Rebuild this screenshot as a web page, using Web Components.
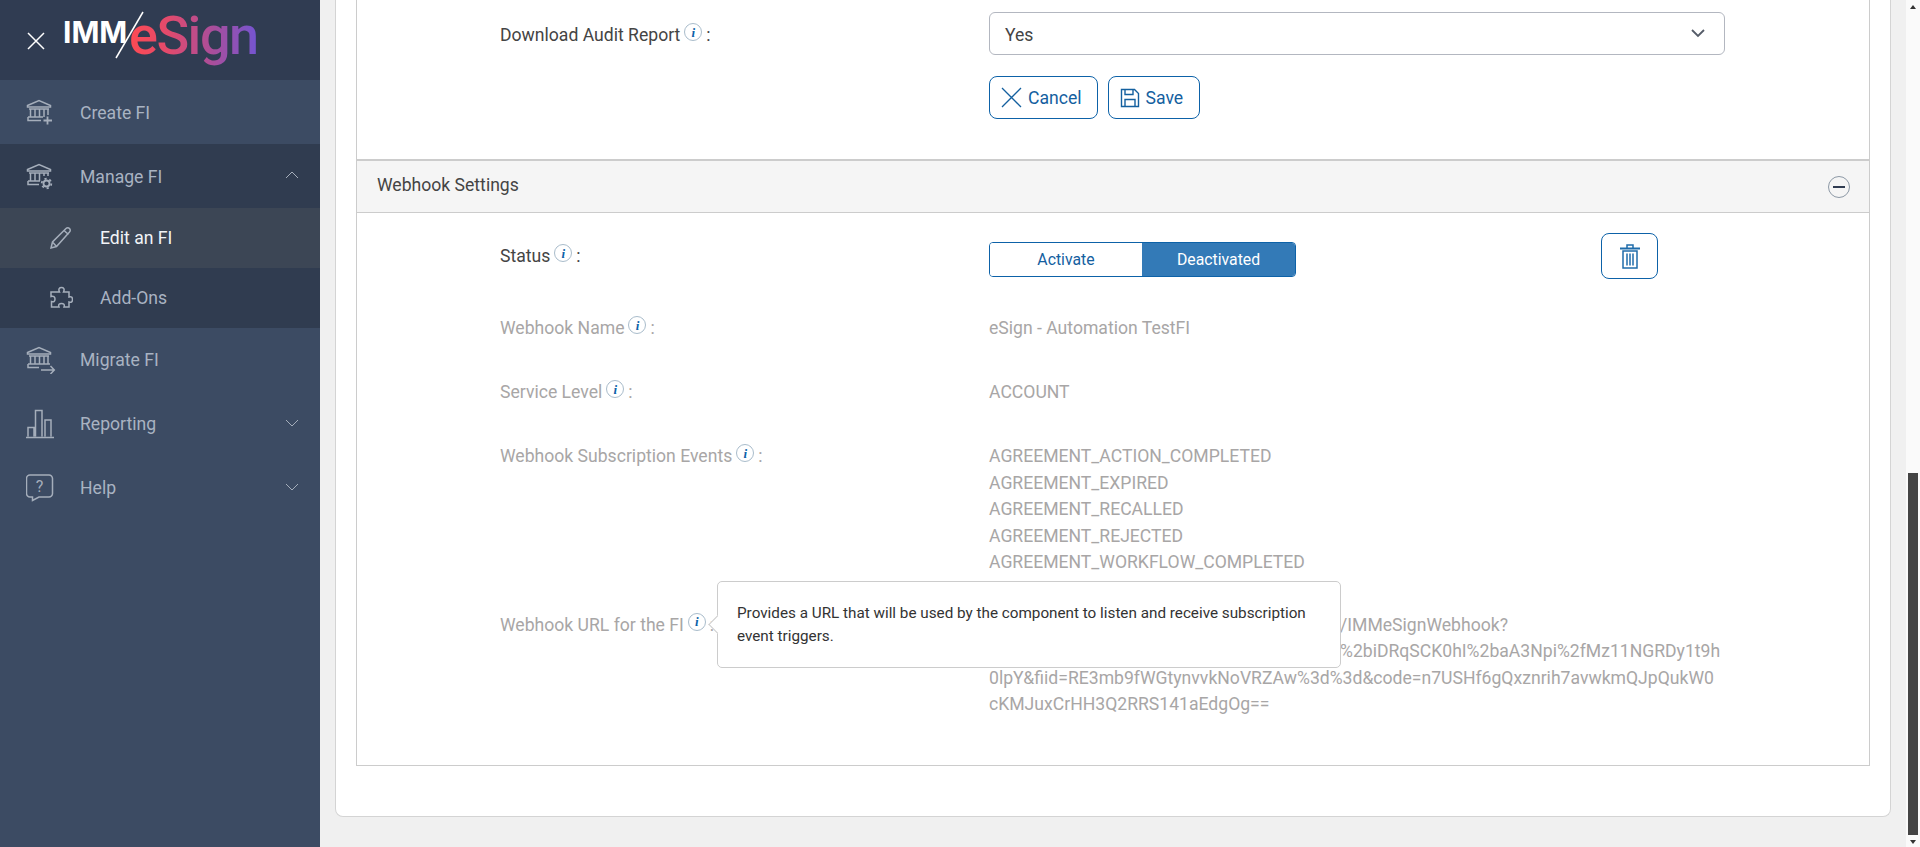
<!DOCTYPE html>
<html lang="en">
<head>
<meta charset="utf-8">
<title>IMM eSign</title>
<style>
  html, body { margin: 0; height: 847px; overflow: hidden; }
  body { font-family: Roboto, "Liberation Sans", sans-serif; font-size: 17.6px; line-height: 1.5; color: #444; }
  #app { display: flex; height: 847px; }
</style>
</head>
<body>
<div id="app">
  <side-bar>
    <nav-item label="Create FI" icon="bank-plus" tone="light" style="padding-top:2px;box-sizing:border-box"></nav-item>
    <nav-item label="Manage FI" icon="bank-gear" chevron="up" tone="dark" style="padding-top:2px;box-sizing:border-box"></nav-item>
    <nav-item label="Edit an FI" icon="pencil" sub tone="active"></nav-item>
    <nav-item label="Add-Ons" icon="puzzle" sub tone="dark"></nav-item>
    <nav-item label="Migrate FI" icon="bank-arrow" tone="light"></nav-item>
    <nav-item label="Reporting" icon="bars" chevron="down" tone="light"></nav-item>
    <nav-item label="Help" icon="help" chevron="down" tone="light"></nav-item>
  </side-bar>
  <main-area>
    <settings-panel>
      <form-row label="Download Audit Report" class="top">
        <select-box>Yes</select-box>
        <div style="display:flex;gap:10px;margin-top:21px">
          <action-button icon="x">Cancel</action-button>
          <action-button icon="save">Save</action-button>
        </div>
      </form-row>
    </settings-panel>
    <section-header>Webhook Settings</section-header>
    <settings-panel class="body">
      <form-row label="Status" class="status">
        <div style="display:flex;justify-content:space-between;width:669px;align-items:flex-start">
          <status-toggle style="margin-top:9px"></status-toggle>
          <delete-button></delete-button>
        </div>
      </form-row>
      <form-row label="Webhook Name" muted>eSign - Automation TestFI</form-row>
      <form-row label="Service Level" muted>ACCOUNT</form-row>
      <form-row label="Webhook Subscription Events" muted style="margin-bottom:36.600px">
        AGREEMENT_ACTION_COMPLETED<br>
        AGREEMENT_EXPIRED<br>
        AGREEMENT_RECALLED<br>
        AGREEMENT_REJECTED<br>
        AGREEMENT_WORKFLOW_COMPLETED
      </form-row>
      <form-row label="Webhook URL for the FI" muted last>
        <!-- start of the first two lines sits under the tooltip in the reference -->
        <span style="margin-left:351px">/IMMeSignWebhook?</span><br>
        <span style="margin-left:351px">%2biDRqSCK0hI%2baA3Npi%2fMz11NGRDy1t9h</span><br>
        0lpY&amp;fiid=RE3mb9fWGtynvvkNoVRZAw%3d%3d&amp;code=n7USHf6gQxznrih7avwkmQJpQukW0<br>
        cKMJuxCrHH3Q2RRS141aEdgOg==
        <info-tip slot="tip">Provides a URL that will be used by the component to listen and receive subscription event triggers.</info-tip>
      </form-row>
    </settings-panel>
  </main-area>
  <scroll-rail></scroll-rail>
</div>

<script>
const ICONS = {
  "bank-plus": `<svg width="28" height="28" viewBox="0 1 28 28"><path d="M1.500 7.500 13 2.500l11.500 5v1.500h-23zM3 11h20M4.500 11v8M9 11v8M13.500 11v8M18 11v8M22 11v6M2 19h15M2 19v3.500h13"/><path d="M21.500 18.500v8M17.500 22.500h8.500" stroke-width="1.800"/></svg>`,
  "bank-gear": `<svg width="28" height="28" viewBox="0 1 28 28"><path d="M1.500 7.500 13 2.500l11.500 5v1.500h-23zM3 11h20M4.500 11v8M9 11v8M13.500 11v8M18 11v3M22 11v3M2 19h12M2 19v3.500h11"/><circle cx="20.500" cy="21.500" r="3" stroke-width="1.800"/><circle cx="20.500" cy="21.500" r="4.800" stroke-width="1.800" stroke-dasharray="2.200 2.800"/></svg>`,
  "bank-arrow": `<svg width="30" height="28" viewBox="0 0 30 28"><path d="M1.500 7.500 13 2.500l11.500 5v1.500h-23zM3 11h20M4.500 11v8M9 11v8M13.500 11v8M18 11v8M22 11v8M2 19h22M2 19v3.500h11M15 25h13M24.500 21l3.800 4-3.800 4" transform="translate(0 -1)"/></svg>`,
  pencil: `<svg width="24" height="24" viewBox="0 0 24 24"><path d="M2 22l1.500-6L17 2.500c1-1 2.500-1 3.500 0s1 2.500 0 3.500L7.500 20.500zM3.500 16l4 4.500M15 4.500l4.500 4"/></svg>`,
  puzzle: `<svg width="24" height="24" viewBox="0 0 24 24"><path d="M8 6h2.500C9 3 10.500 1.500 12.500 1.500S16 3 14.500 6H20v5c2.500-1 3.500.5 3.500 2.500S22.500 17 20 16v5h-5c1-2.500-.5-3.500-2.500-3.500S9 18.500 10 21H2.500v-5.500c2.500 1 3.500-.5 3.500-2.500S4.500 9.500 2 10.500V6z"/></svg>`,
  bars: `<svg width="30" height="30" viewBox="1 0 30 30"><path d="M1 28.500h28M3 27.500v-9h6v9M10.500 27.500V1.500h6.500v26M20 27.500V11h6v16.500"/></svg>`,
  help: `<svg width="30" height="30" viewBox="2 0 30 30"><path d="M6 2h19a3.500 3.500 0 0 1 3.500 3.500v15a3.500 3.500 0 0 1-3.500 3.500H15l-6.500 3.500V24H6a3.500 3.500 0 0 1-3.500-3.500v-15A3.500 3.500 0 0 1 6 2z"/><text x="15.500" y="18.500" text-anchor="middle" font-family="Roboto, sans-serif" font-size="16" fill="#a5aebb" stroke="none">?</text></svg>`,
};

class SideBar extends HTMLElement {
  static styles = `
    <style>
      :host { display: flex; flex-direction: column; width: 320px; flex: none; background: #3c4b63; }
      .brand { height: 80px; background: #303c52; display: flex; align-items: flex-start; flex: none; }
      .close { margin: 32px 0 0 27px; }
      .logo { position: relative; margin: 0 0 0 20px; width: 200px; height: 70px; }
      .imm { position: absolute; left: -2px; top: 12px; font: 700 30px/40px Inter, Roboto, sans-serif; letter-spacing: 0; color: #fff; }
      .esign { position: absolute; left: 64px; top: 4px; font: 500 54px/64px Roboto, sans-serif; letter-spacing: -1.500px;
        background: linear-gradient(90deg, #ff4a52 0%, #e24a6c 30%, #a94e9b 65%, #7355d2 100%);
        -webkit-background-clip: text; background-clip: text; color: transparent; }
      .slash { position: absolute; left: 0; top: 0; }
    </style>
  `;

  get template() {
    return `
      ${SideBar.styles}
      <div class="brand">
        <svg class="close" width="18" height="18" viewBox="0 0 18 18"><path d="M1 1l16 16M17 1L1 17" stroke="#fff" stroke-width="1.500" fill="none"/></svg>
        <div class="logo">
          <span class="imm">IMM</span>
          <span class="esign">eSign</span>
          <svg class="slash" width="100" height="70"><path d="M78 12 51 58" stroke="#fff" stroke-width="1.500"/></svg>
        </div>
      </div>
      <slot></slot>
    `;
  }

  constructor() {
    super();
    this.attachShadow({ mode: "open" });
  }

  connectedCallback() {
    this.shadowRoot.innerHTML = this.template;
  }
}

class NavItem extends HTMLElement {
  static styles = `
    <style>
      :host { display: flex; align-items: center; height: 64px; padding-left: 26px; position: relative; font-size: 17.6px; color: #a9b3c2; flex: none; }
      :host([tone="light"]) { background: #3c4b63; }
      :host([tone="dark"]) { background: #303c50; }
      :host([tone="active"]) { background: #3c4655; color: #f2f4f7; }
      :host([sub]) { height: 60px; padding-left: 49px; }
      .icon { width: 54px; display: flex; flex: none; }
      :host([sub]) .icon { width: 51px; }
      svg { fill: none; stroke: #a5aebb; stroke-width: 1.500; }
      .chev { position: absolute; right: 21px; top: 50%; margin-top: -5px; }
      .chev path { stroke-width: 1; }
    </style>
  `;

  get template() {
    const chevron = this.getAttribute("chevron");
    const paths = { up: "M1 7l6-6 6 6", down: "M1 1l6 6 6-6" };
    return `
      ${NavItem.styles}
      <span class="icon">${ICONS[this.getAttribute("icon")] || ""}</span>
      <span>${this.getAttribute("label")}</span>
      ${chevron ? `<svg class="chev" width="14" height="9" viewBox="0 0 14 9"><path d="${paths[chevron]}"/></svg>` : ""}
    `;
  }

  constructor() {
    super();
    this.attachShadow({ mode: "open" });
  }

  connectedCallback() {
    this.shadowRoot.innerHTML = this.template;
  }
}

class MainArea extends HTMLElement {
  constructor() {
    super();
    this.attachShadow({ mode: "open" }).innerHTML = `
      <style>
        :host { display: block; flex: 1; background: #f0f0f0; padding-left: 15px; min-width: 0; }
        .card { box-sizing: border-box; width: 1556px; height: 817px; background: #fff; border: 1px solid #d4d4d4; border-top: 0; border-radius: 0 0 8px 8px; padding: 0 20px 0 20px; }
      </style>
      <div class="card"><slot></slot></div>
    `;
  }
}

class SettingsPanel extends HTMLElement {
  constructor() {
    super();
    this.attachShadow({ mode: "open" }).innerHTML = `
      <style>
        :host { display: block; box-sizing: border-box; border: 1px solid #ccc; border-width: 0 1px; height: 159px; padding-left: 143px; }
        :host(.body) { height: 553px; border-bottom-width: 1px; padding-top: 20px; }
      </style>
      <slot></slot>
    `;
  }
}

class FormRow extends HTMLElement {
  static styles = `
    <style>
      :host { display: grid; grid-template-columns: 489px 736px; position: relative; margin-bottom: 37.600px; }
      :host(.top) { padding-top: 12px; margin: 0; }
      :host(.top) .label { padding-top: 10px; }
      :host(.status) { margin-bottom: 36.400px; }
      :host(.status) .label { padding-top: 10px; }
      :host([last]) { margin: 0; }
      :host([muted]) { color: #a8a6a6; }
      .label { display: flex; align-items: flex-start; }
      info-mark { margin: 1px 4px 0 4px; }
      .tip { position: absolute; left: 217px; top: -31px; }
    </style>
  `;

  get template() {
    return `
      ${FormRow.styles}
      <div class="label"><span>${this.getAttribute("label")}</span><info-mark></info-mark><span>:</span></div>
      <div class="value"><slot></slot></div>
      <div class="tip"><slot name="tip"></slot></div>
    `;
  }

  constructor() {
    super();
    this.attachShadow({ mode: "open" });
  }

  connectedCallback() {
    this.shadowRoot.innerHTML = this.template;
  }
}

class InfoMark extends HTMLElement {
  constructor() {
    super();
    this.attachShadow({ mode: "open" }).innerHTML = `
      <style>
        :host { display: inline-flex; box-sizing: border-box; width: 18px; height: 18px; border: 1px solid #a9bccb; border-radius: 50%; align-items: center; justify-content: center;
          font: italic 700 13px/1 "Liberation Serif", serif; color: #0d62a8; }
      </style>
      i
    `;
  }
}

class SelectBox extends HTMLElement {
  constructor() {
    super();
    this.attachShadow({ mode: "open" }).innerHTML = `
      <style>
        :host { display: flex; box-sizing: border-box; height: 43px; align-items: center; justify-content: space-between; padding: 0 19px 0 15px; border: 1px solid #b3b7c0; border-radius: 6px; color: #444; }
        span { padding-top: 3px; }
        svg { fill: none; stroke: #555c68; stroke-width: 1.800; }
      </style>
      <span><slot></slot></span>
      <svg width="14" height="9" viewBox="0 0 14 9"><path d="M1 1l6 6 6-6"/></svg>
    `;
  }
}

class ActionButton extends HTMLElement {
  static styles = `
    <style>
      :host { display: inline-flex; box-sizing: border-box; height: 43px; align-items: center; gap: 6px; padding: 0 15px 0 11px; border: 1px solid #0d62a8; border-radius: 8px; color: #14609f; }
      :host([icon="save"]) { padding-right: 16px; }
      span { padding-top: 1px; }
      svg { fill: none; stroke: #14609f; flex: none; }
    </style>
  `;

  get template() {
    const icon = this.getAttribute("icon") === "x"
      ? `<svg width="21" height="21" viewBox="0 0 21 21"><path d="M1 1l19 19M20 1L1 20" stroke-width="1.300"/></svg>`
      : `<svg width="20" height="20" viewBox="0 0 20 20" stroke-width="1.400"><path d="M1.500 1.500h13l4 4v13h-17zM5 1.500v5h8v-5M5 18.500v-7h10v7"/></svg>`;
    return `${ActionButton.styles}${icon}<span><slot></slot></span>`;
  }

  constructor() {
    super();
    this.attachShadow({ mode: "open" });
  }

  connectedCallback() {
    this.shadowRoot.innerHTML = this.template;
  }
}

class SectionHeader extends HTMLElement {
  constructor() {
    super();
    this.attachShadow({ mode: "open" }).innerHTML = `
      <style>
        :host { display: flex; box-sizing: border-box; height: 54px; align-items: center; justify-content: space-between; padding: 0 19px 0 20px; background: #f5f5f5; border: 1px solid #ccc; border-top: 2px solid #ccc; color: #444; }
        .title { margin-top: -2px; }
        .toggle { box-sizing: border-box; width: 22px; height: 22px; border: 1px solid #8d99a6; border-radius: 50%; display: flex; align-items: center; justify-content: center; }
        .toggle i { display: block; width: 12px; height: 2px; background: #303c52; }
      </style>
      <span class="title"><slot></slot></span>
      <span class="toggle"><i></i></span>
    `;
  }
}

class StatusToggle extends HTMLElement {
  constructor() {
    super();
    this.attachShadow({ mode: "open" }).innerHTML = `
      <style>
        :host { display: flex; box-sizing: border-box; width: 307px; height: 35px; border: 1px solid #0d62a8; border-radius: 4px; font-size: 15.800px; line-height: 33px; text-align: center; overflow: hidden; }
        .off { width: 152px; color: #14609f; background: #fff; }
        .on { flex: 1; color: #fff; background: #337ab7; }
      </style>
      <span class="off">Activate</span><span class="on">Deactivated</span>
    `;
  }
}

class DeleteButton extends HTMLElement {
  constructor() {
    super();
    this.attachShadow({ mode: "open" }).innerHTML = `
      <style>
        :host { display: flex; box-sizing: border-box; width: 57px; height: 46px; align-items: center; justify-content: center; border: 1px solid #0d62a8; border-radius: 8px; }
        svg { fill: none; stroke: #1f6cab; }
      </style>
      <svg width="20" height="25" viewBox="0 0 20 25"><path d="M0 4.500h20" stroke-width="2"/><path d="M7 4V1h6v3" stroke-width="1.500"/><path d="M3 7h14v17H3z" stroke-width="1.500"/><path d="M7 9.500v12M10 9.500v12M13 9.500v12" stroke-width="1.500"/></svg>
    `;
  }
}

class InfoTip extends HTMLElement {
  constructor() {
    super();
    this.attachShadow({ mode: "open" }).innerHTML = `
      <style>
        :host { display: block; position: relative; box-sizing: border-box; width: 624px; height: 87px; padding: 20px 15px 0 19px; background: #fff; border: 1px solid #ccc; border-radius: 5px; font-size: 15.250px; line-height: 23px; color: #333; }
        .arrow { position: absolute; left: -7px; top: 36px; width: 12px; height: 12px; background: #fff; border: 1px solid #ccc; border-width: 0 0 1px 1px; transform: rotate(45deg); }
      </style>
      <span class="arrow"></span><slot></slot>
    `;
  }
}

class ScrollRail extends HTMLElement {
  constructor() {
    super();
    this.attachShadow({ mode: "open" }).innerHTML = `
      <style>
        :host { display: flex; flex-direction: column; width: 14px; flex: none; background: #fafafa; align-items: center; }
        .up, .down { flex: none; width: 0; height: 0; border: 3.500px solid transparent; }
        .up { border-bottom: 4px solid #333; margin-top: 2px; }
        .down { border-top: 4px solid #333; margin-top: 5px; }
        .thumb { width: 10px; height: 362px; margin-top: auto; background: #444; }
      </style>
      <span class="up"></span><span class="thumb"></span><span class="down"></span>
    `;
  }
}

customElements.define("side-bar", SideBar);
customElements.define("nav-item", NavItem);
customElements.define("main-area", MainArea);
customElements.define("settings-panel", SettingsPanel);
customElements.define("form-row", FormRow);
customElements.define("info-mark", InfoMark);
customElements.define("select-box", SelectBox);
customElements.define("action-button", ActionButton);
customElements.define("section-header", SectionHeader);
customElements.define("status-toggle", StatusToggle);
customElements.define("delete-button", DeleteButton);
customElements.define("info-tip", InfoTip);
customElements.define("scroll-rail", ScrollRail);
</script>
</body>
</html>
